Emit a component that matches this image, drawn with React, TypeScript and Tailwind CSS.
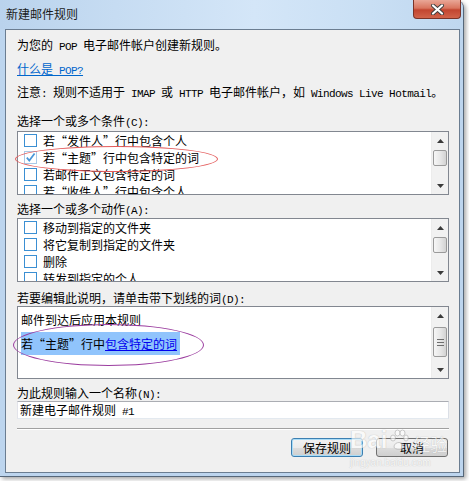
import React from "react";

const ASCII = /^[\x20-\x7e]+$/;

function M({ t }: { t: string }) {
  const parts = t.split(/([\x20-\x7e]+)/).filter((p) => p.length > 0);
  return (
    <>
      {parts.map((p, i) =>
        ASCII.test(p) ? (
          <span
            key={i}
            className="font-['Liberation_Mono',monospace] text-[11px] tracking-[-0.6px] whitespace-pre"
          >
            {p}
          </span>
        ) : (
          <span key={i}>{p}</span>
        )
      )}
    </>
  );
}

function Check({ on }: { on?: boolean }) {
  if (on) {
    return (
      <span className="w-[13px] h-[13px] border border-[#a9c9e7] bg-white shrink-0 flex items-center justify-center">
        <svg width="11" height="11" viewBox="0 0 11 11">
          <path d="M1.8 5.6 L4.3 8.6 L9.6 1.4" fill="none" stroke="#4a96d9" strokeWidth="1.7" />
        </svg>
      </span>
    );
  }
  return <span className="w-[13px] h-[13px] border border-[#3b8fd3] bg-white shrink-0" />;
}

function Arrow({ up }: { up?: boolean }) {
  return (
    <div className="h-[17px] flex items-center justify-center shrink-0">
      <svg width="7" height="4" viewBox="0 0 7 4">
        {up ? <path d="M0 4 L3.5 0 L7 4 Z" fill="#3a3a3a" /> : <path d="M0 0 L3.5 4 L7 0 Z" fill="#3a3a3a" />}
      </svg>
    </div>
  );
}

function VScroll({ thumb, grip }: { thumb: string; grip?: boolean }) {
  return (
    <div className="w-[17px] h-full bg-[#f1f1f1] border-l border-[#ececec] flex flex-col shrink-0">
      <Arrow up />
      <div
        className={
          "mx-[1px] rounded-[2px] border border-[#9a9a9a] bg-[linear-gradient(90deg,#f6f6f6,#e6e6e6_55%,#d3d3d3)] flex flex-col items-center justify-center gap-[2px] " +
          thumb
        }
      >
        {grip && (
          <>
            <span className="w-[7px] h-[1px] bg-[#6e6e6e]" />
            <span className="w-[7px] h-[1px] bg-[#6e6e6e]" />
            <span className="w-[7px] h-[1px] bg-[#6e6e6e]" />
          </>
        )}
      </div>
      <div className="flex-1" />
      <Arrow />
    </div>
  );
}

function ListBox({ items, checked }: { items: string[]; checked?: number }) {
  return (
    <div className="h-[64px] border border-[#828790] bg-white flex overflow-hidden">
      <div className="flex-1 flex flex-col overflow-hidden">
        {items.map((it, i) => (
          <div key={i} className="h-[17px] shrink-0 flex items-center pl-[6px]">
            <Check on={i === checked} />
            <span className="ml-[6px] leading-[17px] whitespace-nowrap">{it}</span>
          </div>
        ))}
      </div>
      <VScroll thumb="mt-[1px] h-[16px]" />
    </div>
  );
}

function Btn({ label, def }: { label: string; def?: boolean }) {
  return (
    <div
      className={
        def
          ? "w-[72px] h-[19px] rounded-[3px] border border-[#3c7fb1] shadow-[inset_0_0_0_1px_#a9dcf7] bg-[linear-gradient(#f2f2f2,#ebebeb_50%,#dddddd_50%,#cfcfcf)] flex items-center justify-center leading-none"
          : "w-[72px] h-[19px] rounded-[3px] border border-[#707070] bg-[linear-gradient(#f2f2f2,#ebebeb_50%,#dddddd_50%,#cfcfcf)] flex items-center justify-center leading-none"
      }
    >
      {label}
    </div>
  );
}

export default function App() {
  return (
    <div className="w-[469px] h-[481px] bg-white relative overflow-hidden font-['Noto_Sans_CJK_SC',sans-serif] text-[12px] text-black">
      <div className="w-[464px] h-[477px] rounded-tr-[8px] border-r border-b border-[#566779] bg-[#bdd5ee] shadow-[2px_2px_4px_rgba(0,0,0,0.35)] flex flex-col relative">
        {/* title bar */}
        <div className="h-[29px] shrink-0 rounded-tr-[8px] bg-[linear-gradient(90deg,#bad3ed_0%,#c6dcf2_25%,#d4e6f8_55%,#c9dff4_80%,#bfd7ef_100%)] flex items-center pl-[6px] pb-[1px]">
          <span className="text-[12px] text-[#1b1b1b] leading-none">新建邮件规则</span>
        </div>
        <div className="absolute top-0 right-[2px] w-[48px] h-[19px] rounded-b-[4px] border border-t-0 border-[#7a3328] bg-[linear-gradient(#e9a797,#d9755f_45%,#c24530_55%,#d1634a)] flex items-center justify-center">
          <svg width="15" height="11" viewBox="0 0 15 11">
            <path d="M3 1.5 L12 9.5 M12 1.5 L3 9.5" stroke="#3d3d3d" strokeWidth="4" strokeLinecap="round" />
            <path d="M3 1.5 L12 9.5 M12 1.5 L3 9.5" stroke="#ffffff" strokeWidth="2.2" strokeLinecap="round" />
          </svg>
        </div>

        {/* client */}
        <div className="ml-[5px] mr-[3px] mb-[3px] flex-1 border border-[#6b7d91] bg-[#f0f0f0] pl-[11px] pr-[10px] pt-[7px] flex flex-col">
          <div className="h-[16px] leading-[16px] whitespace-nowrap">
            <M t="为您的 POP 电子邮件帐户创建新规则。" />
          </div>
          <div className="mt-[8px] h-[16px] leading-[16px] whitespace-nowrap">
            <span className="text-[#0066cc] underline">
              <M t="什么是 POP?" />
            </span>
          </div>
          <div className="mt-[7px] h-[16px] leading-[16px] whitespace-nowrap">
            <M t="注意: 规则不适用于 IMAP 或 HTTP 电子邮件帐户，如 Windows Live Hotmail。" />
          </div>

          <div className="mt-[13px] h-[16px] leading-[16px] whitespace-nowrap">
            <M t="选择一个或多个条件(C):" />
          </div>
          <div className="relative mt-[2px]">
            <ListBox
              items={["若“发件人”行中包含个人", "若“主题”行中包含特定的词", "若邮件正文包含特定的词", "若“收件人”行中包含个人"]}
              checked={1}
            />
            <div className="absolute left-[-2px] top-[15px] w-[203px] h-[26px] rounded-[50%] border border-[#e35a5a] pointer-events-none" />
          </div>

          <div className="mt-[6px] h-[16px] leading-[16px] whitespace-nowrap">
            <M t="选择一个或多个动作(A):" />
          </div>
          <div className="mt-[1px]">
            <ListBox items={["移动到指定的文件夹", "将它复制到指定的文件夹", "删除", "转发到指定的个人"]} />
          </div>

          <div className="mt-[8px] h-[16px] leading-[16px] whitespace-nowrap">
            <M t="若要编辑此说明，请单击带下划线的词(D):" />
          </div>
          <div className="relative h-[73px] border border-[#828790] bg-white flex">
            <div className="flex-1 pl-[3px] pt-[4px] flex flex-col items-start">
              <div className="h-[17px] leading-[17px] whitespace-nowrap">邮件到达后应用本规则</div>
              <div className="mt-[4px] h-[23px] leading-[23px] bg-[#90c4fc] pr-[3px] whitespace-nowrap">
                若“主题”行中<span className="text-[#0000ee] underline">包含特定的词</span>
              </div>
            </div>
            <VScroll thumb="mt-[3px] h-[30px]" grip />
            <div className="absolute left-[-5px] top-[17px] w-[191px] h-[42px] rounded-[50%] border border-[#9b3d9f] pointer-events-none" />
          </div>

          <div className="mt-[6px] h-[16px] leading-[16px] whitespace-nowrap">
            <M t="为此规则输入一个名称(N):" />
          </div>
          <div className="h-[18px] border border-[#abadb3] border-l-[#e2e3ea] border-r-[#dbdfe6] border-b-[#e3e9ef] bg-white pl-[2px] leading-[16px] whitespace-nowrap">
            <M t="新建电子邮件规则 #1" />
          </div>

          <div className="mt-[9px] h-[1px] bg-[#a0a0a0]" />
          <div className="h-[1px] bg-white" />

          <div className="mt-[8px] flex justify-end gap-[13px] pr-[1px]">
            <Btn label="保存规则" def />
            <Btn label="取消" />
          </div>
        </div>
      </div>

      {/* watermark */}
      <div className="absolute left-[350px] top-[428px] pointer-events-none opacity-60 flex flex-col items-start">
        <div className="flex items-end gap-[2px] leading-none">
          <span className="font-['Liberation_Sans',sans-serif] font-bold text-[24px] text-white [text-shadow:0_0_1px_#8a8a8a]">Bai</span>
          <svg width="20" height="22" viewBox="0 0 20 22" className="mb-[1px]">
            <g fill="#ffffff" stroke="#9a9a9a" strokeWidth="0.8">
              <ellipse cx="4" cy="9" rx="2.5" ry="3" />
              <ellipse cx="8.5" cy="4" rx="2.5" ry="3" />
              <ellipse cx="13.5" cy="4" rx="2.5" ry="3" />
              <ellipse cx="17" cy="9" rx="2.3" ry="3" />
              <path d="M5 18 C5 12 15 12 15 18 C15 21 5 21 5 18 Z" />
            </g>
          </svg>
          <span className="text-[17px] text-white [text-shadow:0_0_1px_#8a8a8a] ml-[2px]">经验</span>
        </div>
        <span className="mt-[6px] font-['Liberation_Sans',sans-serif] text-[10px] text-white [text-shadow:0_0_1px_#8a8a8a] leading-none">
          jingyan.baidu.com
        </span>
      </div>
    </div>
  );
}
